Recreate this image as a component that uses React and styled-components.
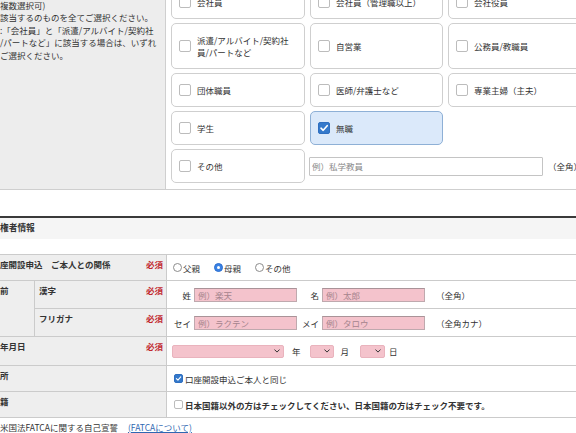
import styled, { createGlobalStyle } from "styled-components";

const GlobalStyle = createGlobalStyle`
  html, body {
    margin: 0;
    padding: 0;
    background: #fff;
    overflow: hidden;
  }
  body {
    font-family: "Noto Sans CJK JP", "Noto Sans", sans-serif;
    font-size: 8.5px;
    color: #333;
  }
`;

const Page = styled.div`
  width: 640px;
`;

/* ---------- occupation block ---------- */

const OccupationSection = styled.section`
  display: grid;
  grid-template-columns: 166px 1fr;
  margin-top: -19px;
  border-bottom: 1px solid #cfcfcf;
`;

const NoteCell = styled.div`
  background: #ededed;
  border-right: 1px solid #cfcfcf;
  padding-top: 18px;
  line-height: 12.4px;
  white-space: nowrap;
  overflow: hidden;
`;

const OptionGrid = styled.div`
  display: grid;
  grid-template-columns: 134px 133px 134px;
  column-gap: 5px;
  row-gap: 4px;
  padding: 4px 0 6px 5px;
  align-items: stretch;
`;

const OptionCard = styled.label`
  display: flex;
  align-items: center;
  gap: 6px;
  box-sizing: border-box;
  padding: 10px 8px 10px 7px;
  border: 1px solid ${(p) => (p.$checked ? "#8eb0d6" : "#cfcfcf")};
  border-radius: 5px;
  background: ${(p) => (p.$checked ? "#dbe9fa" : "#fff")};
  line-height: 12px;
`;

const OptionText = styled.span`
  white-space: pre-line;
`;

const OtherField = styled.div`
  grid-column: span 2;
  display: flex;
  align-items: center;
  margin-left: -1px;
`;

const OtherInput = styled.input`
  width: 238px;
  height: 19px;
  box-sizing: border-box;
  margin: 0;
  padding: 0 2px;
  border: 1px solid #c4c4c4;
  border-radius: 1px;
  background: #fff;
  font: inherit;
  color: #333;

  &::placeholder {
    color: #8a8a8a;
  }
`;

const Hint = styled.span`
  margin-left: ${(p) => p.$gap ?? 5}px;
  white-space: nowrap;
`;

const Box = styled.span`
  flex: none;
  display: flex;
  align-items: center;
  justify-content: center;
  width: ${(p) => p.$size}px;
  height: ${(p) => p.$size}px;
  box-sizing: border-box;
  border: 1px solid ${(p) => (p.$checked ? "#2f6fc0" : "#bcbcbc")};
  border-radius: 2px;
  background: ${(p) => (p.$checked ? "#3479cb" : "#fff")};
`;

function Checkbox({ checked, size = 12 }) {
  return (
    <Box $checked={checked} $size={size}>
      {checked && (
        <svg width={size - 2} height={size - 2} viewBox="0 0 10 10">
          <path
            d="M2 5.2 L4.2 7.3 L8.2 2.7"
            fill="none"
            stroke="#fff"
            strokeWidth="1.6"
            strokeLinecap="round"
            strokeLinejoin="round"
          />
        </svg>
      )}
    </Box>
  );
}

/* ---------- applicant block ---------- */

const ApplicantSection = styled.section`
  margin-top: 26px;
  border-top: 2px solid #3a3a3a;
`;

const SectionHeader = styled.h3`
  margin: 0;
  padding: 4px 0 5px;
  background: #f5f5f5;
  font-size: 8.7px;
  line-height: 12px;
  font-weight: bold;
`;

const Table = styled.div`
  display: grid;
  grid-template-columns: 35px 132px 1fr;
  grid-template-rows: 26px 28px 28px 29px 26px 26px;
  margin-top: 15px;
  border-top: 1px solid #cbcbcb;
`;

const Label = styled.div`
  grid-column: ${(p) => p.$col};
  grid-row: ${(p) => p.$row};
  display: flex;
  justify-content: space-between;
  align-items: flex-start;
  box-sizing: border-box;
  padding: 3px 3px 0 ${(p) => (p.$indent ? 4 : 0)}px;
  background: #eeeeee;
  border-bottom: 1px solid #cbcbcb;
  border-right: 1px solid #cbcbcb;
  font-weight: bold;
  line-height: 12px;
  white-space: nowrap;
`;

const Required = styled.span`
  color: #c1272d;
  font-weight: bold;
`;

const Value = styled.div`
  grid-column: 3;
  grid-row: ${(p) => p.$row};
  display: flex;
  align-items: center;
  box-sizing: border-box;
  padding-left: ${(p) => p.$pad ?? 6}px;
  border-bottom: 1px solid #cbcbcb;
  line-height: 12px;
  white-space: nowrap;
`;

const RadioItem = styled.label`
  display: flex;
  align-items: center;
  gap: 1px;
  margin-right: 14px;
`;

const RadioDot = styled.span`
  flex: none;
  width: 9px;
  height: 9px;
  box-sizing: border-box;
  border-radius: 50%;
  border: 1px solid ${(p) => (p.$checked ? "#2c6fd0" : "#8c8c8c")};
  background: ${(p) => (p.$checked ? "#3a82e4" : "#fff")};
  display: flex;
  align-items: center;
  justify-content: center;

  &::after {
    content: "";
    display: ${(p) => (p.$checked ? "block" : "none")};
    width: 3px;
    height: 3px;
    border-radius: 50%;
    background: #fff;
  }
`;

const NameLabel = styled.span`
  width: ${(p) => p.$w}px;
  text-align: right;
  flex: none;
`;

const PinkInput = styled.input`
  width: 103px;
  height: 14px;
  box-sizing: border-box;
  margin: 0 0 0 3px;
  padding: 0 3px;
  border: 1px solid #bfa9ae;
  border-top-color: #a99398;
  background: #f4c3cc;
  font: inherit;
  color: #333;

  &::placeholder {
    color: #a5848c;
  }
`;

const SelectBox = styled.div`
  width: ${(p) => p.$w}px;
  height: 13px;
  box-sizing: border-box;
  display: flex;
  align-items: center;
  justify-content: flex-end;
  padding-right: 3px;
  border-radius: 2px;
  background: #f4c3cc;
  border: 1px solid #e9b3bd;
`;

const Unit = styled.span`
  margin: 0 ${(p) => p.$after}px 0 ${(p) => p.$before}px;
`;

const CheckText = styled.span`
  margin-left: 2px;
  font-weight: ${(p) => (p.$bold ? "bold" : "normal")};
`;

const Footer = styled.div`
  padding-top: 3px;
  line-height: 12px;
  white-space: nowrap;
`;

const HelpLink = styled.a`
  margin-left: 10px;
  color: #2f67b1;
  text-decoration: underline;
`;

function Chevron() {
  return (
    <svg width="6" height="4" viewBox="0 0 6 4">
      <path
        d="M0.7 0.8 L3 3.1 L5.3 0.8"
        fill="none"
        stroke="#333"
        strokeWidth="1"
        strokeLinecap="round"
        strokeLinejoin="round"
      />
    </svg>
  );
}

function Select({ width }) {
  return (
    <SelectBox $w={width}>
      <Chevron />
    </SelectBox>
  );
}

const occupations = [
  { label: "会社員" },
  { label: "会社員（管理職以上）" },
  { label: "会社役員" },
  { label: "派遣/アルバイト/契約社\n員/パートなど" },
  { label: "自営業" },
  { label: "公務員/教職員" },
  { label: "団体職員" },
  { label: "医師/弁護士など" },
  { label: "専業主婦（主夫）" },
  { label: "学生" },
  { label: "無職", checked: true },
  null,
];

const noteLines = [
  "複数選択可)",
  "該当するのものを全てご選択ください。",
  ":「会社員」と「派遣/アルバイト/契約社",
  "/パートなど」に該当する場合は、いずれ",
  "ご選択ください。",
];

export default function App() {
  return (
    <Page>
      <GlobalStyle />

      <OccupationSection>
        <NoteCell>
          {noteLines.map((line) => (
            <div key={line}>{line}</div>
          ))}
        </NoteCell>
        <OptionGrid>
          {occupations.map((item, i) =>
            item ? (
              <OptionCard key={item.label} $checked={item.checked}>
                <Checkbox checked={item.checked} />
                <OptionText>{item.label}</OptionText>
              </OptionCard>
            ) : (
              <div key={`empty-${i}`} />
            )
          )}
          <OptionCard>
            <Checkbox />
            <OptionText>その他</OptionText>
          </OptionCard>
          <OtherField>
            <OtherInput placeholder="例）私学教員" />
            <Hint>（全角）</Hint>
          </OtherField>
        </OptionGrid>
      </OccupationSection>

      <ApplicantSection>
        <SectionHeader>権者情報</SectionHeader>

        <Table>
          <Label $col="1 / 3" $row="1">
            座開設申込　ご本人との関係
            <Required>必須</Required>
          </Label>
          <Value $row="1">
            <RadioItem>
              <RadioDot />
              父親
            </RadioItem>
            <RadioItem>
              <RadioDot $checked />
              母親
            </RadioItem>
            <RadioItem>
              <RadioDot />
              その他
            </RadioItem>
          </Value>

          <Label $col="1 / 2" $row="2 / 4">
            前
          </Label>
          <Label $col="2 / 3" $row="2" $indent>
            漢字
            <Required>必須</Required>
          </Label>
          <Value $row="2" $pad={0}>
            <NameLabel $w={24}>姓</NameLabel>
            <PinkInput placeholder="例）楽天" />
            <NameLabel $w={22}>名</NameLabel>
            <PinkInput placeholder="例）太郎" />
            <Hint $gap={11}>（全角）</Hint>
          </Value>

          <Label $col="2 / 3" $row="3" $indent>
            フリガナ
            <Required>必須</Required>
          </Label>
          <Value $row="3" $pad={0}>
            <NameLabel $w={24}>セイ</NameLabel>
            <PinkInput placeholder="例）ラクテン" />
            <NameLabel $w={22}>メイ</NameLabel>
            <PinkInput placeholder="例）タロウ" />
            <Hint $gap={11}>（全角カナ）</Hint>
          </Value>

          <Label $col="1 / 3" $row="4">
            年月日
            <Required>必須</Required>
          </Label>
          <Value $row="4" $pad={5}>
            <Select width={112} />
            <Unit $before={8} $after={9}>年</Unit>
            <Select width={24} />
            <Unit $before={7} $after={11}>月</Unit>
            <Select width={25} />
            <Unit $before={4} $after={0}>日</Unit>
          </Value>

          <Label $col="1 / 3" $row="5">
            所
          </Label>
          <Value $row="5" $pad={7}>
            <Checkbox checked size={9} />
            <CheckText>口座開設申込ご本人と同じ</CheckText>
          </Value>

          <Label $col="1 / 3" $row="6">
            籍
          </Label>
          <Value $row="6" $pad={7}>
            <Checkbox size={9} />
            <CheckText $bold>
              日本国籍以外の方はチェックしてください、日本国籍の方はチェック不要です。
            </CheckText>
          </Value>
        </Table>

        <Footer>
          米国法FATCAに関する自己宣誓
          <HelpLink href="#fatca">(FATCAについて)</HelpLink>
        </Footer>
      </ApplicantSection>
    </Page>
  );
}
